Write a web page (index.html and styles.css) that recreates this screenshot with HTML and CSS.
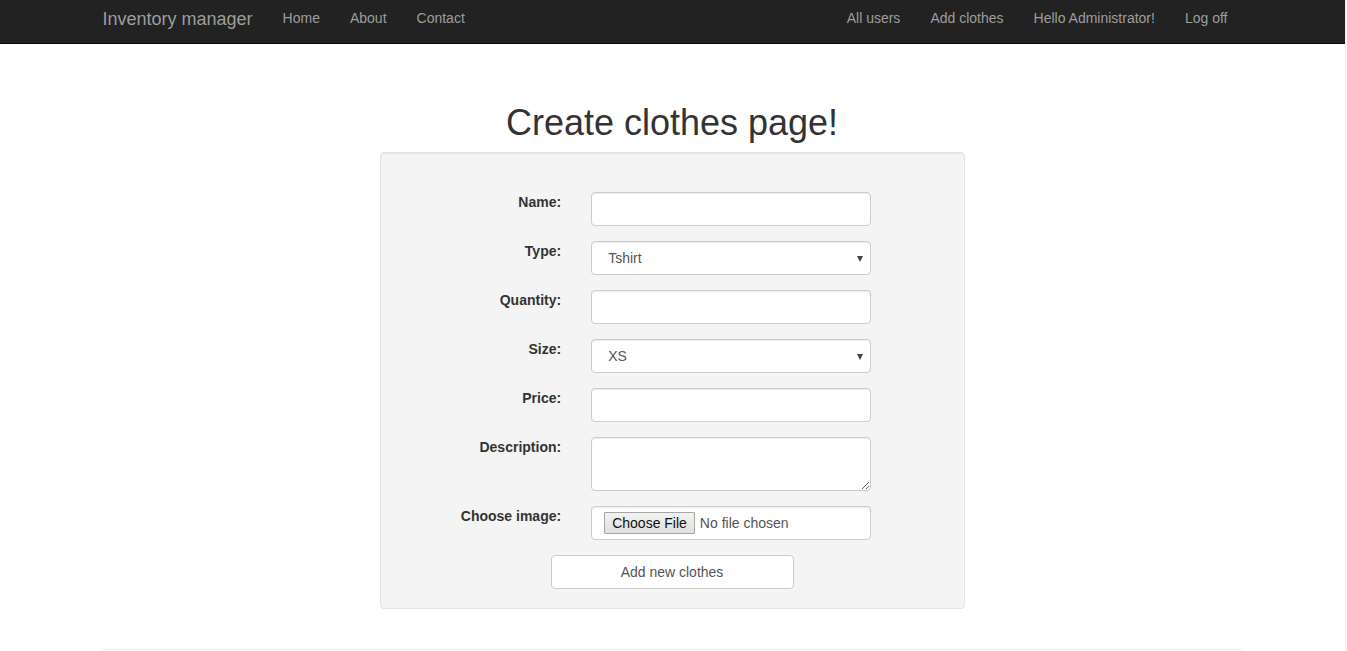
FILE: index.html
```html
<!DOCTYPE html>
<html lang="en">
<head>
<meta charset="utf-8">
<title>Create clothes page</title>
<link rel="stylesheet" href="styles.css">
</head>
<body>
<div class="page">
  <nav class="navbar">
    <div class="container nav-inner">
      <div class="nav-left">
        <a class="brand" href="#">Inventory manager</a>
        <ul class="nav">
          <li><a href="#">Home</a></li>
          <li><a href="#">About</a></li>
          <li><a href="#">Contact</a></li>
        </ul>
      </div>
      <ul class="nav nav-right">
        <li><a href="#">All users</a></li>
        <li><a href="#">Add clothes</a></li>
        <li><a href="#">Hello Administrator!</a></li>
        <li><a href="#">Log off</a></li>
      </ul>
    </div>
  </nav>

  <div class="container body-content">
    <h1 class="title">Create clothes page!</h1>
    <div class="well">
      <form class="form">
        <div class="form-group">
          <label class="control-label">Name:</label>
          <input class="form-control" type="text">
        </div>
        <div class="form-group">
          <label class="control-label">Type:</label>
          <span class="select-wrap"><select class="form-control select"><option>Tshirt</option></select></span>
        </div>
        <div class="form-group">
          <label class="control-label">Quantity:</label>
          <input class="form-control" type="text">
        </div>
        <div class="form-group">
          <label class="control-label">Size:</label>
          <span class="select-wrap"><select class="form-control select"><option>XS</option></select></span>
        </div>
        <div class="form-group">
          <label class="control-label">Price:</label>
          <input class="form-control" type="text">
        </div>
        <div class="form-group">
          <label class="control-label">Description:</label>
          <textarea class="form-control textarea" rows="2"></textarea>
        </div>
        <div class="form-group">
          <label class="control-label">Choose image:</label>
          <div class="form-control file">
            <span class="file-btn">Choose File</span>
            <span class="file-text">No file chosen</span>
          </div>
        </div>
        <button type="button" class="btn">Add new clothes</button>
      </form>
    </div>
    <hr class="rule">
  </div>
</div>
</body>
</html>
```

FILE: styles.css
```css
* { box-sizing: border-box; }

html, body {
  margin: 0;
  padding: 0;
  background: #fff;
}

body {
  font-family: "Liberation Sans", Arial, Helvetica, sans-serif;
  font-size: 14px;
  line-height: 20px;
  color: #333;
}

.page {
  width: 1346px;
  min-height: 651px;
  padding-right: 1px;
  border-right: 1px solid #ececec;
  overflow: hidden;
}

.container {
  width: 1170px;
  padding: 0 15px;
  margin: 0 auto;
}

/* Navbar */
.navbar {
  background: #222;
  border-bottom: 1px solid #080808;
  height: 44px;
  margin-right: -1px;
}

.nav-inner {
  display: flex;
  justify-content: space-between;
  height: 43px;
}

.nav-left {
  display: flex;
}

.brand {
  font-size: 18px;
  line-height: 20px;
  padding: 9px 15px 0;
  margin-left: -15px;
  color: #9d9d9d;
  text-decoration: none;
}

.nav {
  display: flex;
  list-style: none;
  margin: 0;
  padding: 0;
}

.nav a {
  display: block;
  padding: 8px 15px 0;
  line-height: 20px;
  color: #9d9d9d;
  text-decoration: none;
}

.nav-right {
  margin-right: 0;
}

/* Body */
.body-content {
  padding-top: 39px;
}

.title {
  margin: 20px 0 9px;
  font-size: 36px;
  line-height: 1.1;
  font-weight: 500;
  text-align: center;
  color: #333;
}

.well {
  width: 585px;
  margin: 0 auto;
  padding: 19px;
  background: #f4f4f4;
  border: 1px solid #e3e3e3;
  border-radius: 4px;
  box-shadow: inset 0 1px 1px rgba(0, 0, 0, 0.05);
}

.form {
  padding-top: 20px;
}

.form-group {
  display: grid;
  grid-template-columns: 161.67px 1fr;
  column-gap: 30px;
  margin-bottom: 15px;
  align-items: start;
}

.control-label {
  text-align: right;
  font-weight: bold;
  padding-top: 0;
  line-height: 20px;
}

.form-control {
  display: block;
  width: 100%;
  max-width: 280px;
  height: 34px;
  padding: 6px 12px;
  font-family: inherit;
  font-size: 14px;
  line-height: 20px;
  color: #555;
  background: #fff;
  border: 1px solid #ccc;
  border-radius: 4px;
  box-shadow: inset 0 1px 1px rgba(0, 0, 0, 0.075);
  margin: 0;
}

.select-wrap {
  position: relative;
  display: block;
  max-width: 280px;
}

.select {
  -webkit-appearance: none;
  appearance: none;
  padding-left: 16px;
}

.select-wrap::after {
  content: "";
  position: absolute;
  right: 8px;
  top: 15px;
  border-left: 3.5px solid transparent;
  border-right: 3.5px solid transparent;
  border-top: 6px solid #444;
  pointer-events: none;
}

.textarea {
  height: 54px;
  resize: vertical;
}

.file {
  display: flex;
  align-items: center;
  padding: 1px 12px 0;
  color: #555;
}

.file-btn {
  display: inline-block;
  height: 22px;
  line-height: 20px;
  padding: 0 7px;
  font-size: 14px;
  color: #111;
  background: linear-gradient(#f2f2f2, #e0e0e0);
  border: 1px solid #a6a6a6;
  border-radius: 1px;
  margin-right: 5px;
}

.file-text {
  font-size: 14px;
  color: #555;
}

.btn {
  display: block;
  width: 243px;
  height: 34px;
  margin: 1px auto 0;
  padding: 6px 12px;
  font-family: inherit;
  font-size: 14px;
  line-height: 20px;
  color: #555;
  background: #fff;
  border: 1px solid #ccc;
  border-radius: 4px;
  cursor: pointer;
}

.rule {
  margin: 40px 0 0;
  border: 0;
  border-top: 1px solid #eee;
}
```
